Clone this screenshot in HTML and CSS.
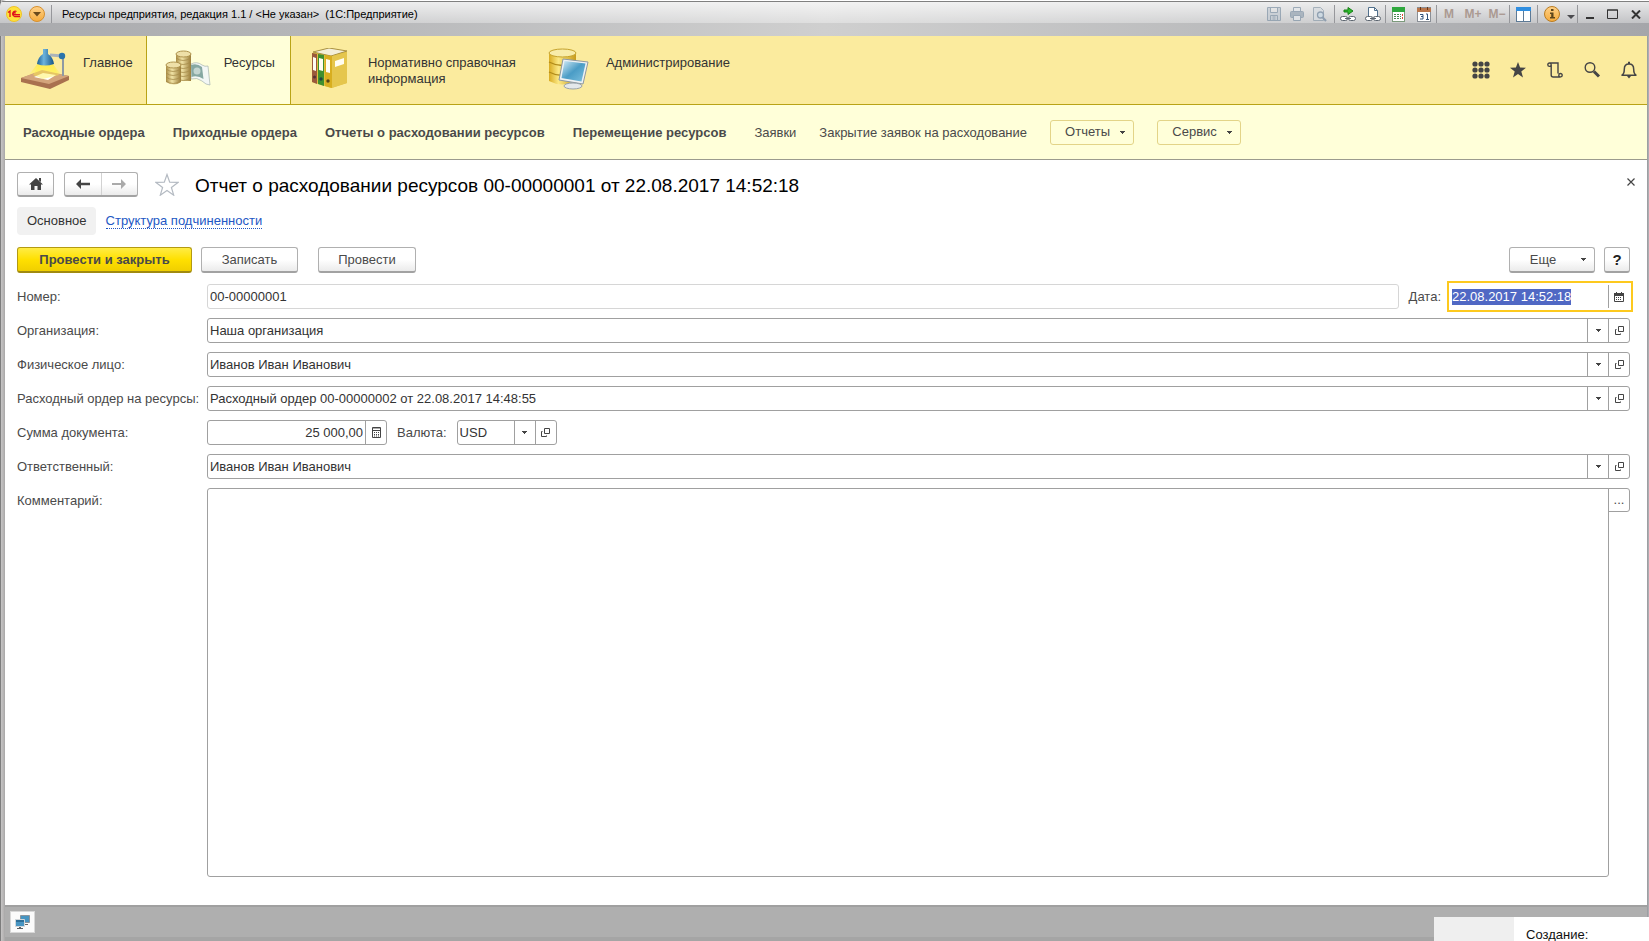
FILE: index.html
```html
<!DOCTYPE html>
<html lang="ru">
<head>
<meta charset="utf-8">
<title>Ресурсы предприятия</title>
<link rel="stylesheet" href="styles.css">
</head>
<body>
<svg width="0" height="0" class="defs" aria-hidden="true">
  <defs>
    <linearGradient id="gold" x1="0" x2="1" y1="0" y2="0"><stop offset="0" stop-color="#d9ab22"/><stop offset=".35" stop-color="#fbe884"/><stop offset="1" stop-color="#c79a1c"/></linearGradient>
    <linearGradient id="coin" x1="0" x2="1" y1="0" y2="0"><stop offset="0" stop-color="#a98c44"/><stop offset=".4" stop-color="#f1e3a6"/><stop offset="1" stop-color="#9a7c38"/></linearGradient>
    <linearGradient id="screen" x1="0" x2="1" y1="0" y2="1"><stop offset="0" stop-color="#d7edf7"/><stop offset=".5" stop-color="#4a9cc6"/><stop offset="1" stop-color="#7cc0de"/></linearGradient>
    <linearGradient id="orange" x1="0" x2="0" y1="0" y2="1"><stop offset="0" stop-color="#ffd28a"/><stop offset="1" stop-color="#f5ab3c"/></linearGradient>
    <linearGradient id="beam" x1="0" x2="0" y1="0" y2="1"><stop offset="0" stop-color="#ffe94a"/><stop offset="1" stop-color="#fff59a" stop-opacity=".5"/></linearGradient>
    <linearGradient id="blue" x1="0" x2="1" y1="0" y2="0"><stop offset="0" stop-color="#1b5f96"/><stop offset=".4" stop-color="#6db4dc"/><stop offset="1" stop-color="#155488"/></linearGradient>
    <symbol id="open" viewBox="0 0 11 11"><path d="M4.500 1.500h5v5h-5zM2.500 4.500h-1v5h5v-1" fill="none" stroke="#444" /></symbol>
    <symbol id="down" viewBox="0 0 5 3"><path d="M0 0h5v1H4v1H3v1H2V2H1V1H0z" fill="#444"/></symbol>
  </defs>
</svg>
<div class="window">
  <header class="titlebar">
    <svg class="ico16" width="16" height="16" viewBox="0 0 16 16"><circle cx="8" cy="8" r="7.500" fill="#ffe23c" stroke="#eec32c"/><path d="M2 6.500l2-1.500v6M10.500 5.500A2.700 2.700 0 1 0 8.500 10.500H14M9.500 7.500a1 1 0 1 0-1 1.200H14" fill="none" stroke="#e0141c" stroke-width="1.300"/></svg>
    <button class="round" aria-label="Меню"><svg width="16" height="16" viewBox="0 0 16 16"><circle cx="8" cy="8" r="7.500" fill="url(#orange)" stroke="#d58f2e"/><path d="M4 6h8L8 10.500z" fill="#6a4a1c"/></svg></button>
    <i class="sep"></i>
    <span class="caption">Ресурсы предприятия, редакция 1.1 / &lt;Не указан&gt;&nbsp; (1С:Предприятие)</span>
    <div class="tools">
      <button class="t23 off" aria-label="Сохранить"><svg width="14" height="14" viewBox="0 0 14 14"><path d="M.5.500h13v13H.5zM3.500.500v5h7v-5M3.500 13.500v-5h7v5M5.500 10h3M5.500 12h3" fill="#c3cbd3" stroke="#7e92a5"/></svg></button>
      <button class="t23 off" aria-label="Печать"><svg width="14" height="14" viewBox="0 0 14 14"><path d="M3.500 5V.500h7V5" fill="#e4e8ec" stroke="#7e92a5"/><rect x=".5" y="4.500" width="13" height="6" rx="1" fill="#96a5b3" stroke="#7e92a5"/><path d="M3.500 8.500h7v5h-7z" fill="#e4e8ec" stroke="#7e92a5"/></svg></button>
      <button class="t23 off" aria-label="Просмотр"><svg width="15" height="15" viewBox="0 0 15 15"><path d="M1.500.500h7l3 3v10h-10z" fill="#d7dce1" stroke="#8b9caa"/><circle cx="8.500" cy="8" r="3" fill="#c9dae6" stroke="#7389a0" stroke-width="1.300"/><path d="M10.700 10.500l3.300 3.500" stroke="#7389a0" stroke-width="2"/></svg></button>
      <i class="sep first"></i>
      <button class="t25" aria-label="Перейти по ссылке"><svg width="16" height="15" viewBox="0 0 16 15"><path d="M4 3h4V.500l5 3.500-5 3.500V5H4z" fill="#2ebb2e" stroke="#178017"/><rect x=".5" y="9.500" width="7" height="4" rx="2" fill="#fff" stroke="#5d6670"/><rect x="8.500" y="9.500" width="7" height="4" rx="2" fill="#fff" stroke="#5d6670"/><path d="M5 11.500h6" stroke="#5d6670"/></svg></button>
      <button class="t25" aria-label="Получить ссылку"><svg width="16" height="15" viewBox="0 0 16 15"><path d="M3.500 9V.500h6l3 3V9" fill="#fff" stroke="#51708c"/><path d="M9.500.500v3h3" fill="none" stroke="#51708c"/><rect x=".5" y="9.500" width="7" height="4" rx="2" fill="#fff" stroke="#5d6670"/><rect x="8.500" y="9.500" width="7" height="4" rx="2" fill="#fff" stroke="#5d6670"/><path d="M5 11.500h6" stroke="#5d6670"/></svg></button>
      <i class="sep"></i>
      <button class="t25" aria-label="Калькулятор"><svg width="14" height="15" viewBox="0 0 14 15"><rect x=".5" y=".5" width="12" height="14" fill="#fff" stroke="#7c9a7c"/><path d="M0 0h13v5H0z" fill="#2fa83e"/><path d="M2 7.500h7M2 9.500h7M2 11.500h7" stroke="#4d8a55" stroke-dasharray="2 1"/><path d="M10.500 7v6" stroke="#e04b3a" stroke-dasharray="2 1"/></svg></button>
      <button class="t25" aria-label="Календарь"><svg width="14" height="15" viewBox="0 0 14 15"><rect x=".5" y=".5" width="13" height="14" fill="#fff" stroke="#8a8f96"/><path d="M0 1h14v4H0z" fill="#b9764c"/><path d="M3.500 0v3M10.500 0v3" stroke="#70360f"/><path d="M3 7.500h3v2H4h2v2.500H3M9 7l1.500 0v5M9 12.500h3" fill="none" stroke="#34557c"/></svg></button>
      <i class="sep"></i>
      <button class="mem">M</button><button class="mem">M+</button><button class="mem">M−</button>
      <i class="sep"></i>
      <button class="t27" aria-label="Панели"><svg width="15" height="15" viewBox="0 0 15 15"><rect x=".5" y=".5" width="14" height="14" fill="#fff" stroke="#5d7a96"/><path d="M0 0h15v4H0z" fill="#2f8ee0"/><path d="M7.500 4v10" stroke="#5d7a96"/></svg></button>
      <i class="sep"></i>
      <button class="t27" aria-label="О программе"><svg width="16" height="16" viewBox="0 0 16 16"><circle cx="8" cy="8" r="7.500" fill="url(#orange)" stroke="#b97c22"/><path d="M7 3h2.500v2H7zM6 6.500h3.500V11H11v1.500H6V11h1.200V8H6z" fill="#5d461c"/></svg></button>
      <button class="t12" aria-label="Ещё"><svg width="8" height="10" viewBox="0 0 8 10"><path d="M0 6h8L4 10z" fill="#4b4b4f"/></svg></button>
      <i class="sep"></i>
      <button class="t23" aria-label="Свернуть"><svg width="8" height="12" viewBox="0 0 8 12"><path d="M0 10h8" stroke="#333" stroke-width="2"/></svg></button>
      <button class="t23" aria-label="Развернуть"><svg width="11" height="10" viewBox="0 0 11 10"><path d="M.5 1h10v8.500H.5z" fill="none" stroke="#333"/><path d="M0 1h11" stroke="#333" /></svg></button>
      <button class="t23" aria-label="Закрыть окно"><svg width="10" height="9" viewBox="0 0 10 9"><path d="M1 .5l8 8M9 .5l-8 8" stroke="#333" stroke-width="2"/></svg></button>
    </div>
  </header>

  <nav class="sections">
    <a class="section" href="#main">
      <svg width="50" height="42" viewBox="0 0 50 42"><path d="M18 15h14l11 14-20 5-14-7z" fill="url(#beam)"/><path d="M1 30l21-7 27 5v4L30 41 1 34z" fill="#a9714f"/><path d="M1 30l21-8 27 6-20 8z" fill="#d3a47b"/><path d="M14 29l9-4 13 2-8 5z" fill="#fff"/><path d="M20 16h12l7 11-16 4-10-4z" fill="#fff04a" opacity=".45"/><path d="M43 9v19" stroke="#8f9aa3" stroke-width="2"/><path d="M30 7l13 1" stroke="#aab3ba" stroke-width="3"/><circle cx="42" cy="8" r="3.200" fill="#2a73ab"/><path d="M23 1h5v5q5 3 6 10-9 3-17 0 1-7 6-10z" fill="url(#blue)"/></svg>
      <span>Главное</span>
    </a>
    <a class="section current" href="#resources">
      <svg width="46" height="38" viewBox="0 0 46 38"><path d="M26 14q6-3 11 1 3 2 6 1l2 19q-4 0-8-4-5-4-11-2z" fill="#f3f7f5" stroke="#a5b3af" stroke-width=".7"/><path d="M26 15q6-2 11 2l1.500 12q-6-4-12-2z" fill="#86a8a2"/><circle cx="32" cy="21" r="3.500" fill="#c3d5d0"/><path d="M11 4h15v27H11z" fill="url(#coin)"/><ellipse cx="18.500" cy="4" rx="7.500" ry="3" fill="#eee0a8" stroke="#af944e"/><path d="M11 8q7 5 15 0M11 12q7 5 15 0M11 16q7 5 15 0M11 20q7 5 15 0M11 24q7 5 15 0M11 28q7 5 15 0" fill="none" stroke="#a48a49" stroke-width=".8"/><path d="M1 15h15v17q-7 5-15 0z" fill="url(#coin)"/><ellipse cx="8.500" cy="15" rx="7.500" ry="3" fill="#eee0a8" stroke="#af944e"/><path d="M1 19q7 5 15 0M1 23q7 5 15 0M1 27q7 5 15 0M1 31q7 5 15 0" fill="none" stroke="#a48a49" stroke-width=".8"/></svg>
      <span>Ресурсы</span>
    </a>
    <a class="section wide" href="#reference">
      <svg width="40" height="42" viewBox="0 0 40 42"><path d="M1 5L19 1l17 3v31L20 40 1 34z" fill="#e1c03e"/><path d="M2 4L18 0l18 3-16 5z" fill="#f4efd9" stroke="#a99040"/><path d="M1 5l5 1v30l-5-2z" fill="#9b5a3c"/><path d="M7 6l6 1v31l-6-2z" fill="#3f8f2f"/><path d="M14 7l7 1v32l-7-2z" fill="#d8ae20"/><path d="M21 8l15-4v31l-15 5z" fill="#e5c64d"/><path d="M2 9l3 1v13l-3-1zM8 10l4 1v12l-4-1zM15 11l4 1v13l-4-1zM24 13l9-3v6l-9 3z" fill="#fffdf2"/><circle cx="3.500" cy="29" r="1.500" fill="#533"/><circle cx="10" cy="31" r="1.700" fill="#244"/><circle cx="17" cy="33" r="1.700" fill="#554418"/></svg>
      <span>Нормативно справочная информация</span>
    </a>
    <a class="section admin" href="#admin">
      <svg width="42" height="42" viewBox="0 0 42 42"><path d="M1 4v29q13 7 27 0V4z" fill="url(#gold)"/><ellipse cx="14.500" cy="5" rx="13.500" ry="4" fill="#f8ecaa" stroke="#c5a22c"/><path d="M1 14q13 7 27 0M1 24q13 7 27 0" fill="none" stroke="#b08a1a" stroke-width="1.300"/><path d="M22 34l9 1v4l-9-1z" fill="#aeb6bd"/><path d="M15 11l25 3-5 22-24-4z" fill="#eef1f3" stroke="#8d98a1"/><path d="M16.500 13l21 2.500-4 18-20-3.500z" fill="url(#screen)"/><ellipse cx="25" cy="38" rx="9" ry="3" fill="#e4e8eb" stroke="#9aa3aa"/></svg>
      <span>Администрирование</span>
    </a>
    <div class="quick">
      <button aria-label="Меню функций"><svg width="18" height="18" viewBox="0 0 18 18" fill="#454545"><circle cx="3" cy="3" r="2.600"/><circle cx="9" cy="3" r="2.600"/><circle cx="15" cy="3" r="2.600"/><circle cx="3" cy="9" r="2.600"/><circle cx="9" cy="9" r="2.600"/><circle cx="15" cy="9" r="2.600"/><circle cx="3" cy="15" r="2.600"/><circle cx="9" cy="15" r="2.600"/><circle cx="15" cy="15" r="2.600"/></svg></button>
      <button aria-label="Избранное"><svg width="18" height="18" viewBox="0 0 18 18"><path d="M9 1l2.100 5.600 5.900.2-4.700 3.700 1.700 5.900L9 13l-5 3.400 1.700-5.900L1 6.800l5.900-.2z" fill="#454545"/></svg></button>
      <button aria-label="История"><svg width="18" height="18" viewBox="0 0 18 18"><path d="M3.500 2h8.500v10.500M3.500 2a1.700 1.700 0 1 0 1.700 1.700Q5.200 2 3.500 2M5.200 3.700V14q0 2 2 2h7.300M14.500 12.500a1.700 1.700 0 1 1-1.700 1.700q0-1.700 1.700-1.700z" fill="none" stroke="#454545" stroke-width="1.400"/></svg></button>
      <button aria-label="Поиск"><svg width="18" height="18" viewBox="0 0 18 18"><circle cx="7" cy="6.500" r="4.800" fill="none" stroke="#454545" stroke-width="1.400"/><path d="M11 10.500l5 5" stroke="#454545" stroke-width="3"/></svg></button>
      <button aria-label="Оповещения"><svg width="18" height="18" viewBox="0 0 18 18"><path d="M2 14.200q2.300-1.500 2.300-6Q4.300 3 9 3t4.700 5.200q0 4.500 2.300 6z" fill="none" stroke="#454545" stroke-width="1.500" stroke-linejoin="round"/><path d="M8 .8h2V3H8zM7 15h4l-2 2.500z" fill="#454545"/></svg></button>
    </div>
  </nav>

  <nav class="commands">
    <a class="strong" href="#1">Расходные ордера</a>
    <a class="strong" href="#2">Приходные ордера</a>
    <a class="strong" href="#3">Отчеты о расходовании ресурсов</a>
    <a class="strong" href="#4">Перемещение ресурсов</a>
    <a href="#5">Заявки</a>
    <a href="#6">Закрытие заявок на расходование</a>
    <button>Отчеты<svg width="5" height="3"><use href="#down"/></svg></button>
    <button>Сервис<svg width="5" height="3"><use href="#down"/></svg></button>
  </nav>

  <main class="page">
    <div class="heading">
      <button class="btn home" aria-label="Начальная страница"><svg width="14" height="12" viewBox="0 0 14 12"><path d="M7 0l7 6.500h-2V12H8.500V8h-3v4H2V6.500H0zM10 0h2v4l-2-1.500z" fill="#444"/></svg></button>
      <div class="history">
        <button aria-label="Назад"><svg width="14" height="10" viewBox="0 0 14 10"><path d="M0 5l5-5v3.700h9v2.600H5V10z" fill="#444"/></svg></button>
        <button aria-label="Вперед"><svg width="14" height="10" viewBox="0 0 14 10"><path d="M14 5L9 0v4H0v2h9v4z" fill="#aaa"/></svg></button>
      </div>
      <button class="fav" aria-label="В избранное"><svg width="24" height="23" viewBox="0 0 24 23"><path d="M12 1.500l2.700 7.700 8.300.2-6.600 5 2.300 7.800-6.700-4.700-6.700 4.700 2.300-7.800L1 9.400l8.300-.2z" fill="#fff" stroke="#b4bac2" stroke-width="1.200"/></svg></button>
      <h1>Отчет о расходовании ресурсов 00-00000001 от 22.08.2017 14:52:18</h1>
      <button class="close" aria-label="Закрыть"><svg width="8" height="8" viewBox="0 0 8 8"><path d="M.5.500l7 7M7.500.500l-7 7" stroke="#444" stroke-width="1.200"/></svg></button>
    </div>
    <div class="tabs"><a class="on" href="#form">Основное</a><a class="link" href="#tree">Структура подчиненности</a></div>
    <div class="toolbar">
      <button class="btn primary">Провести и закрыть</button>
      <button class="btn save">Записать</button>
      <button class="btn post">Провести</button>
      <button class="btn more">Еще<svg width="5" height="3"><use href="#down"/></svg></button>
      <button class="btn help">?</button>
    </div>
    <form class="form">
      <label for="num">Номер:</label>
      <div class="line">
        <div class="field pale grow"><input id="num" value="00-00000001" readonly></div>
        <label class="inner" for="date">Дата:</label>
        <div class="field date"><input id="date" value="22.08.2017 14:52:18" autofocus><button type="button" aria-label="Выбрать дату"><svg width="10" height="10" viewBox="0 0 10 10"><path d="M.5 1.500h9v8h-9z" fill="none" stroke="#444"/><path d="M0 1h10v3H0zM2 0h1v1H2zM7 0h1v1H7z" fill="#444"/><path d="M2 5.500h6M2 7.500h6" stroke="#444" stroke-dasharray="1 1"/></svg></button></div>
      </div>
      <label for="org">Организация:</label>
      <div class="field"><input id="org" value="Наша организация"><button type="button" aria-label="Выбрать"><svg width="5" height="3"><use href="#down"/></svg></button><button type="button" aria-label="Открыть"><svg width="11" height="11"><use href="#open"/></svg></button></div>
      <label for="person">Физическое лицо:</label>
      <div class="field"><input id="person" value="Иванов Иван Иванович"><button type="button" aria-label="Выбрать"><svg width="5" height="3"><use href="#down"/></svg></button><button type="button" aria-label="Открыть"><svg width="11" height="11"><use href="#open"/></svg></button></div>
      <label for="order">Расходный ордер на ресурсы:</label>
      <div class="field"><input id="order" value="Расходный ордер 00-00000002 от 22.08.2017 14:48:55"><button type="button" aria-label="Выбрать"><svg width="5" height="3"><use href="#down"/></svg></button><button type="button" aria-label="Открыть"><svg width="11" height="11"><use href="#open"/></svg></button></div>
      <label for="sum">Сумма документа:</label>
      <div class="line">
        <div class="field sum"><input id="sum" value="25 000,00"><button type="button" aria-label="Калькулятор"><svg width="9" height="11" viewBox="0 0 9 11"><path d="M.5.500h8v10h-8zM1 3.500h7" fill="none" stroke="#444"/><path d="M1 1.500h7" stroke="#aaa"/><path d="M2 5.500h5M2 7.500h5M2 9h5" stroke="#444" stroke-dasharray="1 1"/></svg></button></div>
        <label class="inner" for="cur">Валюта:</label>
        <div class="field cur"><input id="cur" value="USD"><button type="button" aria-label="Выбрать"><svg width="5" height="3"><use href="#down"/></svg></button><button type="button" aria-label="Открыть"><svg width="11" height="11"><use href="#open"/></svg></button></div>
      </div>
      <label for="resp">Ответственный:</label>
      <div class="field"><input id="resp" value="Иванов Иван Иванович"><button type="button" aria-label="Выбрать"><svg width="5" height="3"><use href="#down"/></svg></button><button type="button" aria-label="Открыть"><svg width="11" height="11"><use href="#open"/></svg></button></div>
      <label for="comment">Комментарий:</label>
      <div class="note"><textarea id="comment"></textarea><button type="button" aria-label="Открыть комментарий">...</button></div>
    </form>
  </main>

  <footer class="status">
    <button aria-label="Окна"><svg width="15" height="14" viewBox="0 0 15 14"><path d="M5.500.500h9v7h-9z" fill="#4795c2" stroke="#8b959c"/><path d="M9 9h4v1H9z" fill="#666"/><path d="M.5 4.500h9v7h-9z" fill="#4795c2" stroke="#d2d7da"/><path d="M1 5h8v2H1z" fill="#2e6f98"/><path d="M4 12h2v1h2v1H2v-1h2z" fill="#5a5f63"/></svg></button>
  </footer>
</div>
<aside class="toast"><span>Создание:</span></aside>
<script src="main.js"></script>
</body>
</html>
```
FILE: styles.css
```css
* { box-sizing: border-box; }
body {
  margin: 0;
  font: 13px/16px "Liberation Sans", Arial, sans-serif;
  color: #4a4a4a;
  overflow: hidden;
}
.defs { position: absolute; }
svg { display: block; flex: none; }
button, input, textarea { font: inherit; color: inherit; margin: 0; padding: 0; border: 0; background: none; }
button { display: flex; align-items: center; justify-content: center; }
a { color: inherit; text-decoration: none; }
input, textarea { outline: 0; border-radius: 0; }
h1 { margin: 0; }

.window {
  min-height: 100vh;
  display: flex;
  flex-direction: column;
  padding: 0 2px 4px 5px;
  background: linear-gradient(90deg, #7d7d7d 1px, #c6c5c5 1px, #b3b1b1 4px, #a5a5a5 5px, #a5a5a5 calc(100% - 2px), #96979b calc(100% - 2px), #b4b5b9);
}
.titlebar {
  height: 36px;
  margin: 0 -2px 0 -5px;
  padding: 0 2px 8px 6px;
  display: flex;
  align-items: center;
  border-radius: 6px 0 0 0;
  background:
    linear-gradient(#fff 1px, #808080 1px, #808080 2px, rgba(255, 255, 255, .75) 2px, rgba(255, 255, 255, .32) 23px, transparent 23px),
    linear-gradient(90deg, #a9aaad, #b6b7b9 20%, #cfcfcf 50%, #b6b7b9 80%, #a5a6aa);
}
.round { margin-left: 7px; }
.sep { width: 1px; height: 18px; background: #96979b; flex: none; }
.round + .sep { margin: 0 10px 0 6px; }
.first { margin-left: 3px; }
.caption { font-size: 11px; color: #000; white-space: nowrap; }
.tools { display: flex; align-items: center; margin-left: auto; }
.off { opacity: .7; }
.t12 { width: 12px; }
.t23 { width: 23px; }
.t25 { width: 25px; }
.t27 { width: 27px; }
.mem { width: 24px; font-weight: bold; font-size: 12px; color: #ab9a92; }

.sections {
  display: flex;
  min-height: 69px;
  background: #fbeb9e;
  border-bottom: 1px solid #b9a316;
  color: #333;
}
.section { display: flex; align-items: flex-start; gap: 12px; padding: 12px 13px 0 15px; }
.section span { padding-top: 7px; }
.section svg { margin-right: 1px; }
.section.current { background: #ffffd9; border: solid #b9a316; border-width: 0 1px; padding: 12px 15px 0 18px; }
.section.current svg { margin-top: 2px; }
.section.wide { padding-left: 20px; }
.section.wide span { width: 162px; margin-left: 4px; }
.section.admin { padding-left: 5px; }
.section.admin span { margin-left: 3px; }
.quick { margin-left: auto; display: flex; align-items: center; gap: 19px; padding: 0 9px 0 0; }

.commands {
  display: flex;
  align-items: center;
  gap: 23px;
  min-height: 55px;
  padding: 0 18px;
  background: #ffffd9;
  border-bottom: 1px solid #9b9b8e;
  white-space: nowrap;
}
.strong { font-weight: bold; margin-right: 5px; }
.commands a { padding-top: 1px; }
.commands button { height: 25px; width: 84px; gap: 10px; padding-left: 6px; border: 1px solid #e3d488; border-radius: 3px; }

.page { flex: 1; display: flex; flex-direction: column; background: #fff; padding: 12px 17px 28px 12px; }
.heading { display: flex; align-items: center; height: 25px; }
.btn, .history {
  height: 26px;
  border: 1px solid #b0b0b0;
  border-bottom: 2px solid #a2a2a2;
  border-radius: 3px;
  background: linear-gradient(#fff 50%, #ebebeb);
}
.home, .history { height: 25px; }
.home { width: 37px; }
.history { display: flex; width: 74px; margin-left: 10px; }
.history button { flex: 1; }
.history button + button { border-left: 1px solid #d2d2d2; }
.fav { margin: 0 16px 0 17px; }
h1 { padding-top: 2px; font-size: 19px; line-height: 24px; font-weight: normal; color: #000; white-space: nowrap; }
.close { width: 10px; height: 16px; margin: 0 -6px 6px auto; }
.tabs { display: flex; align-items: center; margin: 10px 0 12px; height: 28px; }
.on { padding: 6px 9px 6px 10px; background: #f1f1f1; border-radius: 4px; color: #333; }
.link { margin-left: 10px; color: #2257c4; border-bottom: 1px dotted #2257c4; line-height: 15px; }
.toolbar { display: flex; margin-bottom: 11px; }
.primary { width: 175px; font-weight: bold; border-color: #b39a12; border-bottom-color: #a08a10; background: linear-gradient(#ffec45, #ffe000 50%, #f0cf00); }
.save { width: 97px; margin-left: 9px; }
.post { width: 98px; margin-left: 20px; }
.more { width: 86px; margin-left: auto; gap: 25px; padding-left: 12px; }
.help { width: 26px; margin-left: 9px; font-weight: bold; font-size: 15px; color: #222; }

.form {
  flex: 1;
  display: grid;
  grid-template-columns: 180px 1fr;
  grid-template-rows: repeat(6, 25px) 1fr;
  gap: 9px 10px;
}
.form > label { line-height: 25px; white-space: nowrap; }
.line { display: flex; align-items: center; }
.inner { margin: 0 10px; }
.field { display: flex; height: 25px; border: 1px solid #a0a0a0; border-radius: 3px; color: #333; background: #fff; }
.field input { flex: 1; min-width: 0; padding: 0 2px; }
.field button { width: 21px; border-left: 1px solid #a0a0a0; flex: none; }
.grow { flex: 1; }
.pale { border-color: #d6d6d6; }
.date { width: 186px; height: 31px; margin: -3px -3px -3px -4px; padding: 1px 2px 1px 1px; border: 2px solid #fdc91e; border-radius: 0; align-items: center; }
.date input { align-self: stretch; }
.date button { height: 23px; }
.date input::selection { background: #5068c4; color: #fff; }
.sum { width: 180px; }
.sum input { text-align: right; }
.cur { width: 100px; }
.note { display: flex; align-items: flex-start; }
.note textarea { flex: 1; align-self: stretch; padding: 3px; border: 1px solid #a0a0a0; border-radius: 3px 0 3px 3px; resize: none; }
.note button { width: 22px; height: 24px; margin-left: -1px; border: 1px solid #a0a0a0; border-radius: 0 3px 3px 0; }

.status { display: flex; align-items: center; height: 32px; padding: 0 5px; background: #afafaf; border-top: 2px solid #a0a0a0; }
.status button { width: 25px; height: 22px; border: 1px solid #d8d8d8; background: #fbfbfb; }
.toast { position: fixed; right: 0; bottom: 0; width: 215px; height: 24px; overflow: hidden; padding: 10px 0 0 92px; background: linear-gradient(90deg, #efefef 80px, #fff 80px); color: #111; }
```
FILE: main.js
```js
const date = document.getElementById("date");
date.focus();
date.select();
```
